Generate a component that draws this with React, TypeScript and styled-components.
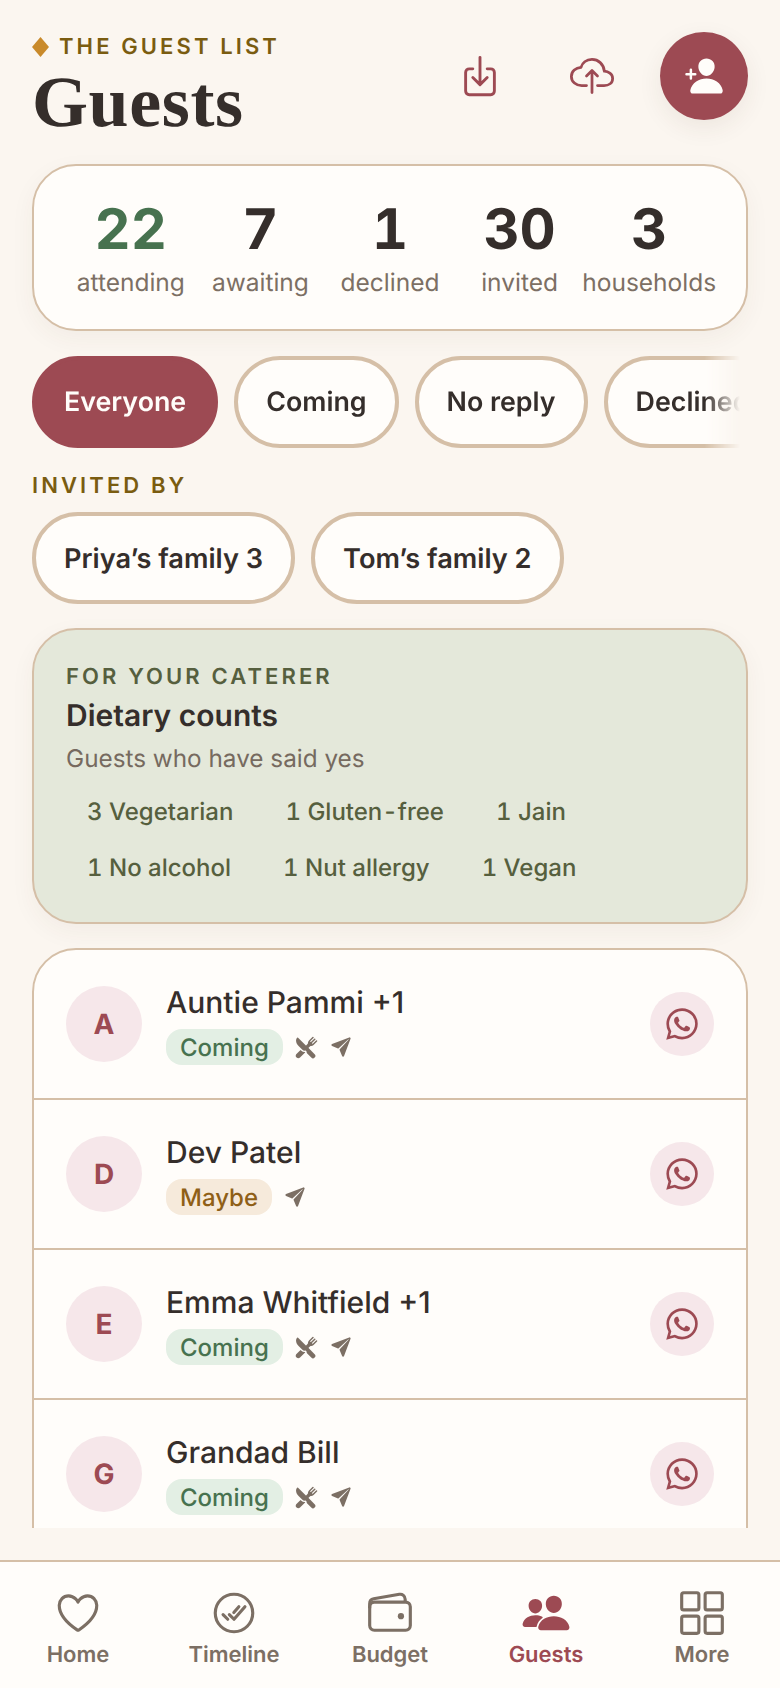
import React from "react";
import styled, { createGlobalStyle } from "styled-components";
import {
  IoDownloadOutline,
  IoCloudUploadOutline,
  IoPersonAdd,
  IoRestaurant,
  IoPaperPlane,
  IoLogoWhatsapp,
  IoHeartOutline,
  IoCheckmarkDoneCircleOutline,
  IoWalletOutline,
  IoPeople,
  IoGridOutline,
} from "react-icons/io5";

const Global = createGlobalStyle`
  html, body { margin: 0; padding: 0; background: #fbf6f0; }
  * { box-sizing: border-box; }
  body { text-rendering: geometricPrecision; }
`;

const Screen = styled.div`
  width: 780px;
  height: 1688px;
  display: flex;
  flex-direction: column;
  background: #fbf6f0;
  font-family: Inter, "Noto Sans", sans-serif;
  color: #352e2b;
  overflow: hidden;
`;

const Main = styled.main`
  height: 1528px;
  flex: none;
  padding: 32px 32px 0;
  display: flex;
  flex-direction: column;
  overflow: hidden;
`;

const Header = styled.header`
  display: flex;
  justify-content: space-between;
  align-items: flex-start;
  height: 88px;
  flex: none;
`;

const TitleBlock = styled.div`
  display: flex;
  flex-direction: column;
  padding-top: 2px;
`;

const Eyebrow = styled.div`
  display: flex;
  align-items: center;
  gap: 10px;
  height: 26px;
  font-size: 22px;
  font-weight: 600;
  letter-spacing: 3.1px;
  color: #7a5c10;
`;

const Diamond = styled.span`
  width: 17px;
  height: 20px;
  background: #c98a2b;
  clip-path: polygon(50% 0, 100% 50%, 50% 100%, 0 50%);
`;

const Title = styled.h1`
  margin: 4px 0 0;
  font-family: "Liberation Serif", serif;
  font-size: 72px;
  line-height: 76px;
  font-weight: 700;
  letter-spacing: 0.6px;
  color: #352e2b;
`;

const Actions = styled.div`
  display: flex;
  gap: 24px;
`;

const ActionButton = styled.div<{ $primary?: boolean }>`
  width: 88px;
  height: 88px;
  border-radius: 50%;
  display: flex;
  align-items: center;
  justify-content: center;
  color: ${(p) => (p.$primary ? "#fffdfa" : "#9d4a53")};
  background: ${(p) => (p.$primary ? "#9d4a53" : "transparent")};
  box-shadow: ${(p) => (p.$primary ? "0 8px 24px rgba(80, 50, 40, 0.08)" : "none")};
`;

const StatsCard = styled.section`
  flex: none;
  margin-top: 44px;
  height: 167px;
  border: 2px solid #d5bfa7;
  border-radius: 44px;
  background: #fffdfa;
  box-shadow: 0 8px 24px rgba(80, 50, 40, 0.05);
  padding: 33px 32px 0;
  display: grid;
  grid-template-columns: repeat(5, minmax(0, 1fr));
`;

const Stat = styled.div`
  display: flex;
  flex-direction: column;
  align-items: center;
  white-space: nowrap;
`;

const StatValue = styled.div<{ $green?: boolean }>`
  font-size: 56px;
  line-height: 60px;
  font-weight: 700;
  font-variant-numeric: tabular-nums;
  color: ${(p) => (p.$green ? "#47724f" : "#352e2b")};
`;

const StatLabel = styled.div`
  margin-top: 7px;
  font-size: 24.5px;
  line-height: 32px;
  color: #7c6f64;
`;

const ChipScroller = styled.div`
  flex: none;
  margin-top: 25px;
  width: 708px;
  display: flex;
  gap: 16px;
  overflow: hidden;
  -webkit-mask-image: linear-gradient(to right, #000 95%, transparent 100%);
  mask-image: linear-gradient(to right, #000 95%, transparent 100%);
`;

const ChipRow = styled.div`
  flex: none;
  display: flex;
  gap: 16px;
`;

const Chip = styled.div<{ $active?: boolean }>`
  flex: none;
  height: 92px;
  padding: 0 28px;
  display: flex;
  align-items: center;
  border-radius: 46px;
  font-size: 26.8px;
  font-weight: 600;
  white-space: nowrap;
  border: 4px solid ${(p) => (p.$active ? "#9d4a53" : "#d5bfa7")};
  background: ${(p) => (p.$active ? "#9d4a53" : "#fffdfa")};
  color: ${(p) => (p.$active ? "#fffdfa" : "#352e2b")};
`;

const FamilyChip = styled(Chip)`
  font-size: 27.2px;
`;

const SectionLabel = styled.div`
  flex: none;
  margin-top: 25px;
  margin-bottom: 13px;
  font-size: 22px;
  line-height: 26px;
  font-weight: 600;
  letter-spacing: 3.1px;
  color: #7a5c10;
`;

const DietCard = styled.section`
  flex: none;
  margin-top: 24px;
  height: 296px;
  border: 2px solid #d5bfa7;
  border-radius: 44px;
  background: #e4e8da;
  box-shadow: 0 8px 24px rgba(80, 50, 40, 0.05);
  padding: 33px 32px 0;
`;

const DietEyebrow = styled.div`
  font-size: 22px;
  line-height: 28px;
  font-weight: 600;
  letter-spacing: 3.1px;
  color: #565f3e;
`;

const DietTitle = styled.div`
  margin-top: 5px;
  font-size: 30px;
  line-height: 40px;
  font-weight: 600;
  color: #352e2b;
`;

const DietSub = styled.div`
  margin-top: 4px;
  font-size: 24.3px;
  line-height: 36px;
  color: #766a5f;
`;

const Tags = styled.div`
  margin-top: 13px;
  display: flex;
  flex-wrap: wrap;
  gap: 12px 10px;
`;

const Tag = styled.div`
  height: 44px;
  padding: 0 21px;
  display: flex;
  align-items: center;
  font-size: 24px;
  font-weight: 500;
  font-variant-numeric: tabular-nums;
  color: #565f3e;
`;

const ListCard = styled.section`
  flex: none;
  margin-top: 24px;
  min-height: 700px;
  border: 2px solid #d5bfa7;
  border-radius: 44px;
  background: #fffdfa;
`;

const Row = styled.div`
  height: 150px;
  padding: 0 32px;
  display: flex;
  align-items: center;
  gap: 24px;
  border-bottom: 2px solid #d5bfa7;
`;

const Avatar = styled.div`
  width: 76px;
  height: 76px;
  flex: none;
  border-radius: 50%;
  background: #f6e7ea;
  color: #9d4a53;
  display: flex;
  align-items: center;
  justify-content: center;
  font-size: 28px;
  font-weight: 700;
`;

const RowBody = styled.div`
  flex: 1;
  display: flex;
  flex-direction: column;
  gap: 6px;
`;

const Name = styled.div`
  font-size: 30px;
  line-height: 40px;
  font-weight: 500;
  color: #352e2b;
`;

const Meta = styled.div`
  display: flex;
  align-items: center;
  gap: 12px;
  color: #7c6f64;
`;

const Status = styled.span<{ $tone: "yes" | "maybe" }>`
  height: 36px;
  padding: 0 14px;
  display: flex;
  align-items: center;
  border-radius: 16px;
  font-size: 24px;
  font-weight: 500;
  color: ${(p) => (p.$tone === "yes" ? "#47724f" : "#8f5f17")};
  background: ${(p) => (p.$tone === "yes" ? "#e3efe4" : "#f6eadb")};
`;

const ChatButton = styled.div`
  width: 64px;
  height: 64px;
  flex: none;
  border-radius: 50%;
  background: #f6e7ea;
  color: #9d4a53;
  display: flex;
  align-items: center;
  justify-content: center;
`;

const Nav = styled.nav`
  flex: none;
  margin-top: 32px;
  height: 128px;
  border-top: 2px solid #d5bfa7;
  background: #fffdfa;
  display: grid;
  grid-template-columns: repeat(5, 1fr);
  padding-top: 26px;
`;

const NavItem = styled.div<{ $active?: boolean }>`
  display: flex;
  flex-direction: column;
  align-items: center;
  gap: 1px;
  font-size: 22px;
  line-height: 32px;
  font-weight: 600;
  color: ${(p) => (p.$active ? "#9d4a53" : "#7c6f64")};
`;

const guests = [
  { name: "Auntie Pammi +1", tone: "yes" as const, diet: true },
  { name: "Dev Patel", tone: "maybe" as const, diet: false },
  { name: "Emma Whitfield +1", tone: "yes" as const, diet: true },
  { name: "Grandad Bill", tone: "yes" as const, diet: true },
];

const stats = [
  ["22", "attending"],
  ["7", "awaiting"],
  ["1", "declined"],
  ["30", "invited"],
  ["3", "households"],
];

const diets = ["3 Vegetarian", "1 Gluten-free", "1 Jain", "1 No alcohol", "1 Nut allergy", "1 Vegan"];

export default function App() {
  return (
    <Screen>
      <Global />
      <Main>
        <Header>
          <TitleBlock>
            <Eyebrow>
              <Diamond />
              THE GUEST LIST
            </Eyebrow>
            <Title>Guests</Title>
          </TitleBlock>
          <Actions>
            <ActionButton><IoDownloadOutline size={46} /></ActionButton>
            <ActionButton><IoCloudUploadOutline size={44} /></ActionButton>
            <ActionButton $primary><IoPersonAdd size={40} /></ActionButton>
          </Actions>
        </Header>

        <StatsCard>
          {stats.map(([value, label], i) => (
            <Stat key={label}>
              <StatValue $green={i === 0}>{value}</StatValue>
              <StatLabel>{label}</StatLabel>
            </Stat>
          ))}
        </StatsCard>

        <ChipScroller>
          <Chip $active>Everyone</Chip>
          <Chip>Coming</Chip>
          <Chip>No reply</Chip>
          <Chip>Declined</Chip>
        </ChipScroller>

        <SectionLabel>INVITED BY</SectionLabel>
        <ChipRow>
          <FamilyChip>Priya’s family 3</FamilyChip>
          <FamilyChip>Tom’s family 2</FamilyChip>
        </ChipRow>

        <DietCard>
          <DietEyebrow>FOR YOUR CATERER</DietEyebrow>
          <DietTitle>Dietary counts</DietTitle>
          <DietSub>Guests who have said yes</DietSub>
          <Tags>
            {diets.map((d) => (
              <Tag key={d}>{d}</Tag>
            ))}
          </Tags>
        </DietCard>

        <ListCard>
          {guests.map((g) => (
            <Row key={g.name}>
              <Avatar>{g.name[0]}</Avatar>
              <RowBody>
                <Name>{g.name}</Name>
                <Meta>
                  <Status $tone={g.tone}>{g.tone === "yes" ? "Coming" : "Maybe"}</Status>
                  {g.diet && <IoRestaurant size={23} />}
                  <IoPaperPlane size={22} />
                </Meta>
              </RowBody>
              <ChatButton><IoLogoWhatsapp size={36} /></ChatButton>
            </Row>
          ))}
        </ListCard>
      </Main>

      <Nav>
        <NavItem><IoHeartOutline size={50} />Home</NavItem>
        <NavItem><IoCheckmarkDoneCircleOutline size={50} />Timeline</NavItem>
        <NavItem><IoWalletOutline size={50} />Budget</NavItem>
        <NavItem $active><IoPeople size={50} />Guests</NavItem>
        <NavItem><IoGridOutline size={50} />More</NavItem>
      </Nav>
    </Screen>
  );
}
